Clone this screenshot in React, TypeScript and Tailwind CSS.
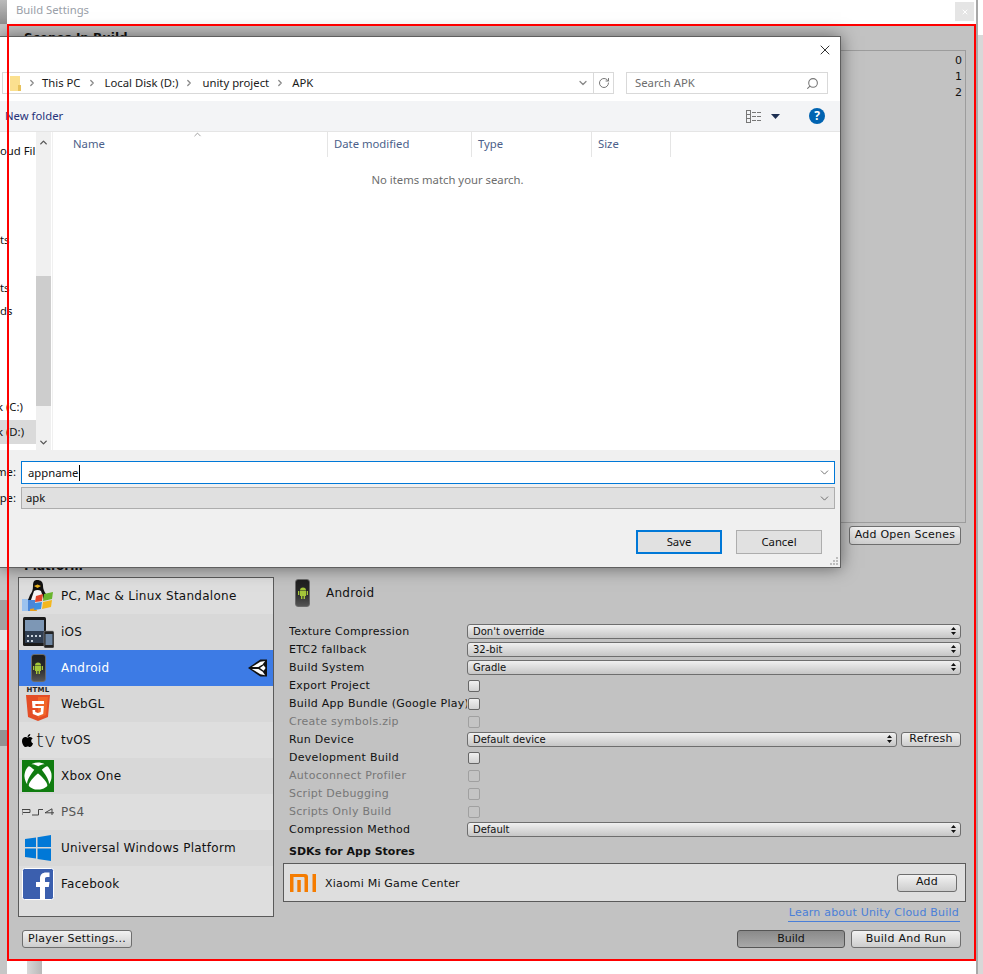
import { ChevronDown, ChevronRight, ChevronUp, RotateCw, Search, X } from "lucide-react";
import { FaApple, FaXbox } from "react-icons/fa";

const unity = "font-['DejaVu_Sans',sans-serif]";
const win = "font-['Noto_Sans',sans-serif]";

const btn =
  "flex items-center justify-center rounded-[3px] border border-[#6e6e6e] bg-linear-to-b from-[#f2f2f2] to-[#cdcdcd] text-[11px] tracking-[0.25px] text-[#111]";

function PcIcon() {
  return (
    <svg width="32" height="32" viewBox="0 0 32 32">
      <rect x="0" y="19" width="13" height="12" fill="#4a86d8" />
      <path d="M0 19h6v12H0z" fill="#9cc2ee" />
      <path d="M15 0c4 0 6 2 6 6 0 3 1 5 3 8l2 6H6l2-5c2-3 3-5 3-9 0-4 1-6 4-6z" fill="#111" />
      <path d="M12 11c2-1.500 5-1.500 7 0l3 9H9z" fill="#f4f4f4" />
      <path d="M12 6l3.500-1.500L19 6l-3.500 2z" fill="#e8b220" />
      <path d="M8 29l6-1 1 3H8z" fill="#e8a020" />
      <path d="M14 16l7-2-1 7-7 1z" fill="#e2452a" />
      <path d="M22 14l9-2-1 7-9 2z" fill="#69b52e" />
      <path d="M13 23l7-1-1 7-7 1z" fill="#3d8fe0" />
      <path d="M21 22l9-2-1 7-9 2z" fill="#f3b71e" />
    </svg>
  );
}

function IosIcon() {
  return (
    <svg width="31" height="31" viewBox="0 0 31 31">
      <rect x="0" y="0" width="23" height="29" rx="1.500" fill="#1a1a1a" />
      <rect x="2" y="3" width="19" height="23" fill="#2f3d50" />
      <rect x="2" y="3" width="19" height="11" fill="#7d97b5" />
      <path d="M4 18h2v2H4zM8 18h2v2H8zM12 18h2v2h-2zM16 18h2v2h-2zM4 23h2v2H4zM8 23h2v2H8z" fill="#c9d3dd" />
      <rect x="21" y="14" width="10" height="17" rx="1.500" fill="#222" stroke="#999" strokeWidth="0.6" />
      <rect x="22.500" y="17" width="7" height="11" fill="#6d86a3" />
    </svg>
  );
}

function AndroidPhone() {
  return (
    <div className="flex h-[28px] w-[15px] items-center justify-center rounded-[3px] border border-[#6a6a6a] bg-linear-to-b from-[#1e1e1e] via-[#2a2a2a] to-[#555]">
      <svg width="10" height="12" viewBox="0 0 10 12" fill="#a4c639">
        <path d="M2 3.500a3 3 0 0 1 6 0z" />
        <rect x="2" y="4" width="6" height="5" />
        <rect x="0" y="4" width="1.300" height="4" />
        <rect x="8.700" y="4" width="1.300" height="4" />
        <rect x="3" y="9" width="1.400" height="3" />
        <rect x="5.600" y="9" width="1.400" height="3" />
      </svg>
    </div>
  );
}

function Html5Icon() {
  return (
    <div className="flex flex-col items-center">
      <span className="text-[7px] leading-[7px] font-bold text-[#222]">HTML</span>
      <svg width="24" height="26" viewBox="0 0 24 26" className="mt-[1px]">
        <path d="M0 0h24l-2 22-10 4-10-4z" fill="#e44d26" />
        <path d="M12 2h10l-2 18-8 3z" fill="#f16529" />
        <path d="M18 6H6l.5 7H15l-.3 4-2.700 1-2.700-1-.2-2H6.500l.3 4 5.200 2 5.200-2 .7-8H9.500l-.2-2H18z" fill="#fff" />
      </svg>
    </div>
  );
}

function TvIcon() {
  return (
    <div className="flex items-center">
      <FaApple size={15} color="#000" />
      <span className="ml-[1px] text-[20px] leading-none font-extralight text-[#111]">tv</span>
    </div>
  );
}

function XboxIcon() {
  return (
    <div className="flex h-[32px] w-[32px] items-center justify-center bg-[#107c10]">
      <FaXbox size={28} color="#fff" />
    </div>
  );
}

function Ps4Icon() {
  return (
    <svg width="32" height="8" viewBox="0 0 32 8" fill="none" stroke="#444" strokeWidth="1">
      <path d="M0 7V1.500h8V4.500H1" />
      <path d="M10 7h6.500V1.500H21" />
      <path d="M30 7V.8L23 4.800h9" />
    </svg>
  );
}

function WinIcon() {
  return (
    <svg width="26" height="26" viewBox="0 0 26 26" fill="#0078d7">
      <path d="M0 4l11-1.600V12H0z" />
      <path d="M12.500 2.200L26 0v12H12.500z" />
      <path d="M0 13.500h11v10L0 22z" />
      <path d="M12.500 13.500H26V26l-13.500-2z" />
    </svg>
  );
}

function FbIcon() {
  return (
    <svg width="32" height="32" viewBox="0 0 32 32">
      <rect x="0.500" y="0.500" width="31" height="31" rx="2" fill="#3b5fae" stroke="#fff" />
      <path d="M18 31V19h-4v-5h4v-3.500C18 6.500 20.500 4.500 24 4.500h3.500V9H25c-1.500 0-2 .8-2 2v3h4.500l-.7 5H23v12z" fill="#fff" />
    </svg>
  );
}

function MiIcon() {
  return (
    <svg width="26" height="18" viewBox="0 0 26 18" fill="#f57c00">
      <path d="M0 0h15a3 3 0 0 1 3 3v15h-3.500V4a1 1 0 0 0-1-1H3.500v15H0z" />
      <rect x="7.300" y="6" width="3.500" height="12" />
      <rect x="22.500" y="0" width="3.500" height="18" />
    </svg>
  );
}

function UnityIcon() {
  return (
    <svg width="19" height="18" viewBox="0 0 20 18">
      <path d="M0 9L13 0h7v18h-7z" fill="#111" />
      <path d="M4 8l9-5.500 5-1-2.500 3.500L11 8z" fill="#fff" />
      <path d="M4 10h7l4.500 3 2.500 3.500-5-1z" fill="#fff" />
      <path d="M12.500 9l4-3 2 3-2 3z" fill="#fff" />
    </svg>
  );
}

const platforms = [
  { name: "PC, Mac & Linux Standalone", icon: <PcIcon /> },
  { name: "iOS", icon: <IosIcon /> },
  { name: "Android", icon: <AndroidPhone />, active: true },
  { name: "WebGL", icon: <Html5Icon /> },
  { name: "tvOS", icon: <TvIcon /> },
  { name: "Xbox One", icon: <XboxIcon /> },
  { name: "PS4", icon: <Ps4Icon />, dim: true },
  { name: "Universal Windows Platform", icon: <WinIcon /> },
  { name: "Facebook", icon: <FbIcon /> },
];

function SelectBox({ value, className = "w-[494px]" }: { value: string; className?: string }) {
  return (
    <div className={`mb-[2px] flex h-[15px] items-center justify-between rounded-[3px] border border-[#6e6e6e] bg-linear-to-b from-[#f0f0f0] to-[#c6c6c6] pr-[4px] pl-[5px] text-[10px] text-[#111] ${className}`}>
      <span>{value}</span>
      <svg width="5" height="8" viewBox="0 0 5 8" fill="#111">
        <path d="M2.500 0L5 3H0zM2.500 8L0 5h5z" />
      </svg>
    </div>
  );
}

function Check({ off }: { off?: boolean }) {
  return (
    <div className={`ml-[1px] h-[12px] w-[12px] rounded-[2px] border ${off ? "border-[#a0a0a0] bg-[#c4c4c4]" : "border-[#666] bg-linear-to-b from-[#f0f0f0] to-[#d2d2d2]"}`} />
  );
}

function Row({ label, off, children }: { label: string; off?: boolean; children: React.ReactNode }) {
  return (
    <div className="flex h-[18px] items-center pl-[6px]">
      <span className={`w-[178px] overflow-hidden text-[11px] tracking-[0.28px] whitespace-nowrap ${off ? "text-[#777]" : "text-[#111]"}`}>{label}</span>
      {children}
    </div>
  );
}

function FileDialog() {
  return (
    <div className={`${win} absolute top-[36px] left-0 z-10 flex h-[532px] w-[841px] flex-col border-t border-r border-b border-[#5f5f5f] bg-white text-[11.3px] shadow-[0_0_16px_rgba(0,0,0,0.5)]`}>
      {/* Title row */}
      <div className="flex h-[35px] items-center justify-end pr-[7px] pb-[9px]">
        <X size={16} strokeWidth={1.3} color="#111" />
      </div>

      {/* Address and search */}
      <div className="flex h-[22px] items-stretch pl-[2px]">
        <div className="flex w-[612px] items-center border border-[#d9d9d9] pl-[7px] text-[#1a1a1a]">
          <svg width="11" height="16" viewBox="0 0 11 16">
            <path d="M0 1h10v15H0z" fill="#fbe08f" />
            <path d="M8 10h3v6H8z" fill="#e8c25c" />
          </svg>
          <ChevronRight size={10} color="#888" strokeWidth={3} className="mr-[5px] ml-[6px]" />
          <span>This PC</span>
          <ChevronRight size={10} color="#888" strokeWidth={3} className="mr-[8px] ml-[6px]" />
          <span>Local Disk (D:)</span>
          <ChevronRight size={10} color="#888" strokeWidth={3} className="mr-[8px] ml-[6px]" />
          <span>unity project</span>
          <ChevronRight size={10} color="#888" strokeWidth={3} className="mr-[7px] ml-[6px]" />
          <span>APK</span>
          <div className="ml-auto flex h-full items-center">
            <ChevronDown size={12} color="#888" strokeWidth={2.5} className="mr-[4px]" />
            <div className="flex h-full w-[20px] items-center justify-center border-l border-[#d9d9d9]">
              <RotateCw size={12} color="#777" strokeWidth={2} />
            </div>
          </div>
        </div>
        <div className="ml-[12px] flex w-[202px] items-center justify-between border border-[#d9d9d9] pr-[8px] pl-[8px] text-[#6d6d6d]">
          <span>Search APK</span>
          <Search size={13} color="#777" strokeWidth={2} className="-scale-x-100" />
        </div>
      </div>

      {/* Toolbar */}
      <div className="mt-[7px] flex h-[30px] items-center bg-[#f3f4f6] pl-[5px] text-[#26337a]">
        <span>New folder</span>
        <div className="ml-auto flex items-center pr-[15px]">
          <svg width="16" height="13" viewBox="0 0 16 13" fill="none" stroke="#777">
            <rect x="0.500" y="0.500" width="4" height="12" />
            <path d="M6 2.500h4M11 2.500h4M6 6.500h4M11 6.500h4M6 10.500h4M11 10.500h4M.5 4.500h4M.5 8.500h4" />
          </svg>
          <svg width="9" height="5" viewBox="0 0 9 5" className="ml-[9px]">
            <path d="M0 0h9L4.500 5z" fill="#1d2f52" />
          </svg>
          <div className="ml-[29px] flex h-[16px] w-[16px] items-center justify-center rounded-full bg-[#0063b1] text-[12px] leading-none font-bold text-white">?</div>
        </div>
      </div>

      {/* Nav and file list */}
      <div className="flex h-[319px] border-t border-[#e5e5e5]">
        <div className="flex w-[36px] shrink-0 flex-col overflow-hidden text-[#111]">
          <span className="mt-[10px] leading-[18px] whitespace-nowrap">oud Fil</span>
          <span className="mt-[71px] leading-[18px]">ts</span>
          <span className="mt-[30px] leading-[18px]">ts</span>
          <span className="mt-[5px] leading-[18px]">ds</span>
          <span className="mt-[78px] -ml-[3px] leading-[18px] whitespace-nowrap">k (C:)</span>
          <div className="mt-[4px] flex h-[24px] items-center bg-[#dadada] whitespace-nowrap">
            <span className="-ml-[3px]">k (D:)</span>
          </div>
        </div>
        <div className="flex w-[15px] shrink-0 flex-col items-stretch bg-[#f0f0f0]">
          <div className="flex h-[144px] justify-center pt-[5px]">
            <ChevronUp size={11} color="#555" strokeWidth={3} />
          </div>
          <div className="h-[130px] bg-[#cdcdcd]" />
          <div className="flex flex-1 items-end justify-center pb-[2px]">
            <ChevronDown size={11} color="#555" strokeWidth={3} />
          </div>
        </div>
        <div className="ml-[1px] min-w-0 flex-1 border-l border-[#f0f0f0]">
          <div className="flex h-[25px] text-[#4c5f8a]">
            <div className="relative flex w-[274px] items-center pl-[20px]">
              Name
              <ChevronUp size={11} color="#777" strokeWidth={1.5} className="absolute top-[-3px] left-[139px]" />
            </div>
            <div className="flex w-[144px] items-center border-l border-[#e5e5e5] pl-[6px]">Date modified</div>
            <div className="flex w-[120px] items-center border-l border-[#e5e5e5] pl-[6px]">Type</div>
            <div className="flex w-[80px] items-center border-r border-l border-[#e5e5e5] pl-[6px]">Size</div>
          </div>
          <div className="mt-[15px] pl-[2px] text-center text-[#6d6d6d]">No items match your search.</div>
        </div>
      </div>

      {/* File name, type and buttons */}
      <div className="flex flex-1 flex-col bg-[#f0f0f0] pt-[11px] pr-[5px]">
        <div className="flex h-[23px] items-center">
          <div className="flex w-[21px] shrink-0 justify-end pr-[5px] whitespace-nowrap text-[#111]">me:</div>
          <div className="flex h-full flex-1 items-center justify-between border border-[#0078d7] bg-white pr-[3px] pl-[6px] text-[#111]">
            <span className="border-r border-black leading-[16px]">appname</span>
            <ChevronDown size={13} color="#555" strokeWidth={1.5} />
          </div>
        </div>
        <div className="mt-[3px] flex h-[22px] items-center">
          <div className="flex w-[21px] shrink-0 justify-end pr-[5px] whitespace-nowrap text-[#111]">pe:</div>
          <div className="flex h-full flex-1 items-center justify-between border border-[#adadad] bg-[#e0e0e0] pr-[3px] pl-[4px] text-[#111]">
            <span>apk</span>
            <ChevronDown size={13} color="#555" strokeWidth={1.5} />
          </div>
        </div>
        <div className="mt-[21px] flex justify-end pr-[13px] text-[#111]">
          <div className="flex h-[24px] w-[86px] items-center justify-center border-2 border-[#0078d7] bg-[#e1e1e1]">Save</div>
          <div className="ml-[14px] flex h-[24px] w-[86px] items-center justify-center border border-[#adadad] bg-[#e1e1e1]">Cancel</div>
        </div>
        <div className="mt-auto -mr-[5px] flex justify-end pr-[2px] pb-[2px]">
          <svg width="8" height="8" viewBox="0 0 8 8" fill="#bdbdbd">
            <path d="M6 0h2v2H6zM3 3h2v2H3zM6 3h2v2H6zM0 6h2v2H0zM3 6h2v2H3zM6 6h2v2H6z" />
          </svg>
        </div>
      </div>
    </div>
  );
}

export default function App() {
  return (
    <div className={`${unity} relative flex h-[974px] w-[983px] overflow-hidden bg-white`}>
      {/* Window strip on the left */}
      <div className="flex w-[7px] shrink-0 flex-col bg-[#c6c6c6]">
        <div className="h-[24px] bg-linear-to-b from-[#bbbbbb] to-[#8f8f8f]" />
        <div className="mt-[576px] h-[30px] bg-[#a3a3a3]" />
        <div className="h-[20px] bg-[#e4e4e4]" />
        <div className="mt-[80px] h-[16px] bg-[#929292]" />
      </div>

      <div className="flex w-[969px] shrink-0 flex-col">
        <div className="flex h-[24px] items-start justify-between pt-[2px] pr-[2px] pl-[9px]">
          <span className={`${win} text-[11.3px] text-[#9aa0a8]`}>Build Settings</span>
          <div className="flex h-[19px] w-[19px] items-center justify-center bg-[#e5e5e5]">
            <X size={8} color="#fff" strokeWidth={3} />
          </div>
        </div>

        {/* Build settings panel */}
        <div className="flex h-[937px] flex-col bg-[#c2c2c2] pr-[10px] pl-[11px]">
          <span className="mt-[6px] ml-[6px] text-[12px] leading-[16px] font-bold text-[#111]">Scenes In Build</span>
          <div className="mt-[4px] flex h-[473px] flex-col items-end border border-[#9c9c9c] pt-[2px] pr-[3px] text-[11px] leading-[16px] text-[#111]">
            <span>0</span>
            <span>1</span>
            <span>2</span>
          </div>
          <div className="mt-[3px] flex justify-end pr-[5px]">
            <div className={`${btn} h-[19px] w-[112px]`}>Add Open Scenes</div>
          </div>
          <span className="mt-[13px] ml-[6px] text-[12px] leading-[16px] font-bold text-[#111]">Platform</span>

          <div className="mt-[3px] flex">
            <div className="h-[340px] w-[256px] shrink-0 border border-[#5a5a5a] bg-[#dedede]">
              {platforms.map((p, i) => (
                <div
                  key={p.name}
                  className={`flex h-[36px] items-center justify-between pr-[6px] text-[12px] tracking-[0.27px] ${
                    p.active ? "bg-[#3d7be5] text-white" : i % 2 === 1 ? "bg-[#d8d8d8] text-[#111]" : "bg-[#dedede] text-[#111]"
                  } ${p.dim ? "text-[#555]!" : ""}`}
                >
                  <div className="flex items-center">
                    <div className="flex w-[42px] shrink-0 items-center justify-center pr-[4px]">{p.icon}</div>
                    <span>{p.name}</span>
                  </div>
                  {p.active && <UnityIcon />}
                </div>
              ))}
            </div>

            <div className="ml-[9px] flex min-w-0 flex-1 flex-col">
              <div className="flex h-[30px] items-center pt-[1px] pl-[12px] text-[12px] tracking-[0.27px] text-[#111]">
                <AndroidPhone />
                <span className="ml-[16px]">Android</span>
              </div>
              <div className="mt-[16px]">
                <Row label="Texture Compression"><SelectBox value="Don't override" /></Row>
                <Row label="ETC2 fallback"><SelectBox value="32-bit" /></Row>
                <Row label="Build System"><SelectBox value="Gradle" /></Row>
                <Row label="Export Project"><Check /></Row>
                <Row label="Build App Bundle (Google Play)"><Check /></Row>
                <Row label="Create symbols.zip" off><Check off /></Row>
                <Row label="Run Device">
                  <SelectBox value="Default device" className="w-[430px]" />
                  <div className={`${btn} mb-[2px] ml-[4px] h-[15px] w-[60px]`}>Refresh</div>
                </Row>
                <Row label="Development Build"><Check /></Row>
                <Row label="Autoconnect Profiler" off><Check off /></Row>
                <Row label="Script Debugging" off><Check off /></Row>
                <Row label="Scripts Only Build" off><Check off /></Row>
                <Row label="Compression Method"><SelectBox value="Default" /></Row>
              </div>
              <span className="mt-[5px] ml-[6px] text-[11px] leading-[16px] font-bold text-[#111]">SDKs for App Stores</span>
              <div className="mt-[3px] flex h-[39px] items-center border border-[#5a5a5a] bg-[#dedede] pr-[8px] pl-[6px] text-[11px] tracking-[0.2px] text-[#111]">
                <MiIcon />
                <span className="ml-[9px] pt-[3px]">Xiaomi Mi Game Center</span>
                <div className={`${btn} ml-auto h-[18px] w-[60px]`}>Add</div>
              </div>
              <div className="mt-[3px] flex justify-end pr-[6px]">
                <span className="border-b border-[#4a7fd8] px-[1px] text-[11px] leading-[16px] tracking-[0.2px] text-[#4a7fd8]">Learn about Unity Cloud Build</span>
              </div>
            </div>
          </div>

          <div className="mt-[8px] flex items-center justify-between pr-[5px] pl-[4px]">
            <div className={`${btn} h-[18px] w-[110px]`}>Player Settings...</div>
            <div className="flex">
              <div className="flex h-[18px] w-[108px] items-center justify-center rounded-[3px] border border-[#555] bg-linear-to-b from-[#8a8a8a] to-[#a8a8a8] text-[11px] text-[#111]">Build</div>
              <div className={`${btn} ml-[6px] h-[18px] w-[110px]`}>Build And Run</div>
            </div>
          </div>
        </div>

        <div className="flex flex-1">
          <div className="ml-[20px] h-full w-[15px] bg-linear-to-r from-[#d8d8d8] to-[#b8b8b8]" />
        </div>
      </div>

      {/* Window strip on the right */}
      <div className="flex w-[7px] shrink-0 border-l-2 border-[#a8a8a8] bg-white">
        <div className="mt-[35px] flex-1 bg-[#d8d8d8]" />
      </div>

      <FileDialog />

      {/* Red marker drawn over the screenshot */}
      <div className="pointer-events-none absolute top-[24px] left-[7px] z-20 h-[937px] w-[969px] border-2 border-[#ff0000]" />
    </div>
  );
}
